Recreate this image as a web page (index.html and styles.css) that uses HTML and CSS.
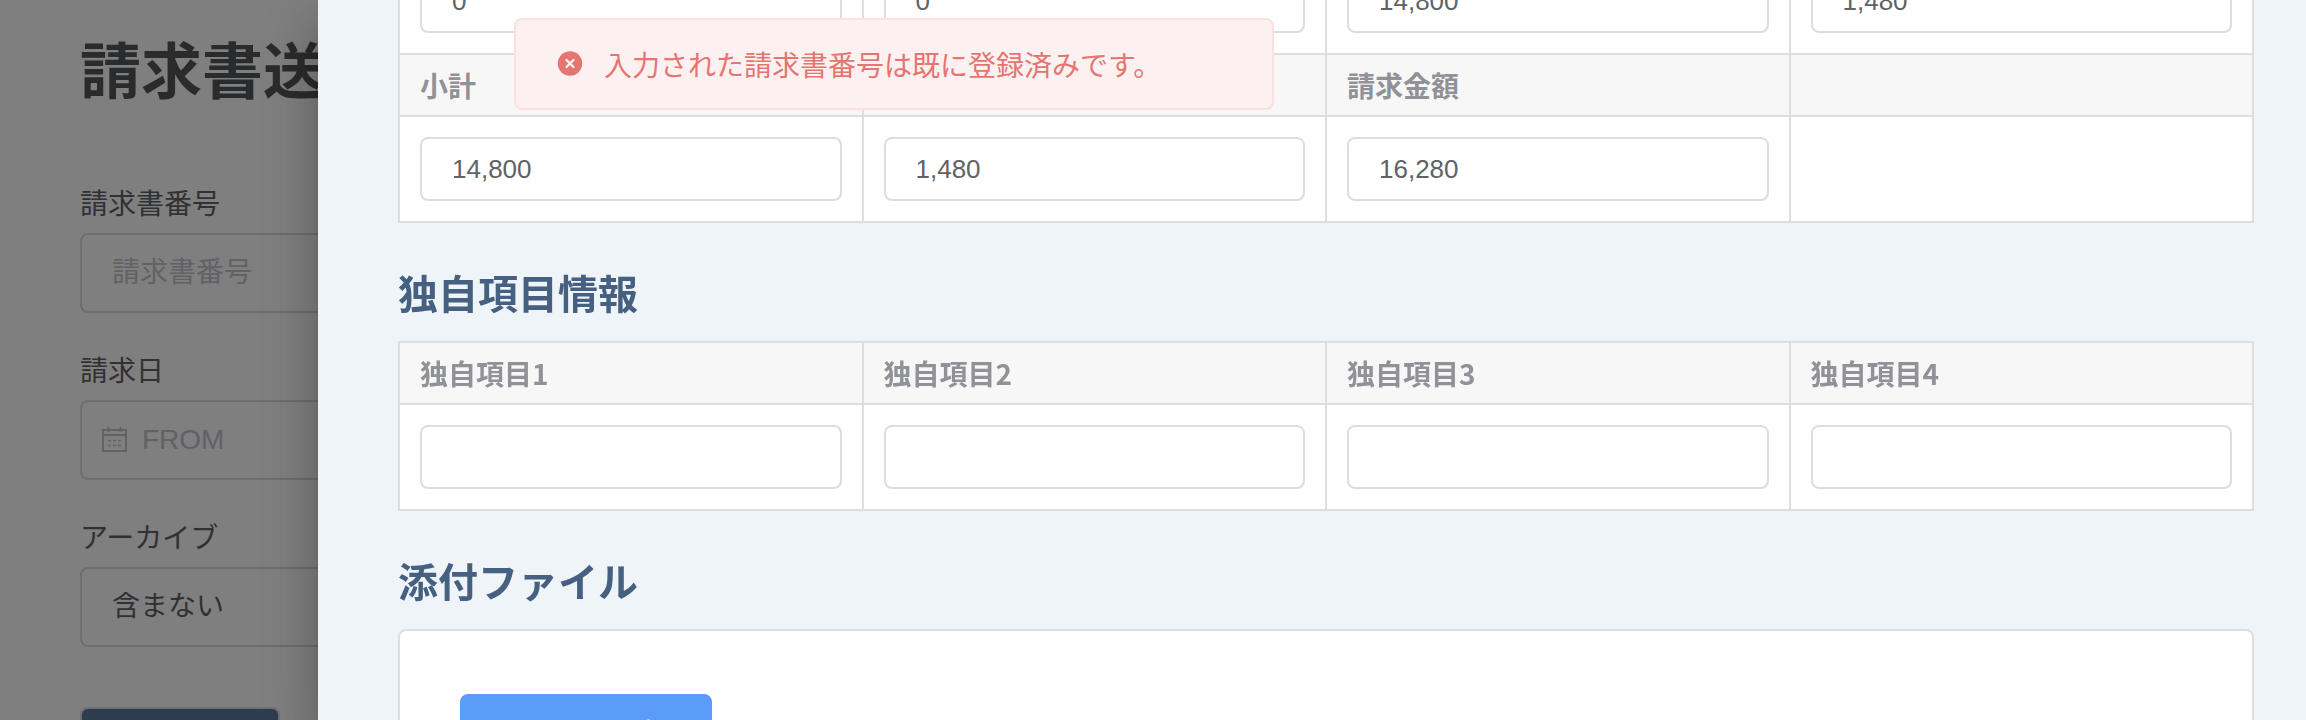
FILE: index.html
```
<!doctype html>
<html lang="ja">
<head>
    <meta charset="UTF-8">
    <meta name="viewport" content="width=device-width, initial-scale=1.0">
    <title>請求書送付</title>
    <link rel="stylesheet" href="styles.css">
</head>
<body>
    <main class="page">
        <h1 class="page-title">請求書送付</h1>
        <form class="search">
            <div class="field">
                <label for="number">請求書番号</label>
                <input class="control" type="text" id="number" placeholder="請求書番号">
            </div>
            <div class="field">
                <label for="from">請求日</label>
                <div class="control date">
                    <svg class="calendar" viewBox="0 0 26 26" fill="none" stroke="currentColor" stroke-width="2">
                        <path d="M1 3h23v21H1zM1 8h23M6.500 0v5M18.500 0v5"/>
                        <path d="M6 13.500h3M11 13.500h3M16 13.500h3M6 18.500h3M11 18.500h3M16 18.500h3" stroke-width="1.6"/>
                    </svg>
                    <input type="text" id="from" placeholder="FROM">
                </div>
            </div>
            <div class="field">
                <label for="archive">アーカイブ</label>
                <select class="control" id="archive">
                    <option>含まない</option>
                </select>
            </div>
            <button class="search-button" type="button">検索</button>
        </form>
    </main>

    <div class="overlay">
        <section class="drawer">
            <div class="drawer-body">
                <table class="items">
                    <tr>
                        <td><input type="text" value="0" aria-label="金額"></td>
                        <td><input type="text" value="0" aria-label="消費税"></td>
                        <td><input type="text" value="14,800" aria-label="金額"></td>
                        <td><input type="text" value="1,480" aria-label="消費税"></td>
                    </tr>
                    <tr>
                        <th id="subtotal">小計</th>
                        <th></th>
                        <th id="total">請求金額</th>
                        <th></th>
                    </tr>
                    <tr>
                        <td><input type="text" value="14,800" aria-labelledby="subtotal"></td>
                        <td><input type="text" value="1,480" aria-label="消費税"></td>
                        <td><input type="text" value="16,280" aria-labelledby="total"></td>
                        <td></td>
                    </tr>
                </table>

                <h2>独自項目情報</h2>
                <table class="items">
                    <tr>
                        <th id="item1">独自項目1</th>
                        <th id="item2">独自項目2</th>
                        <th id="item3">独自項目3</th>
                        <th id="item4">独自項目4</th>
                    </tr>
                    <tr>
                        <td><input type="text" aria-labelledby="item1"></td>
                        <td><input type="text" aria-labelledby="item2"></td>
                        <td><input type="text" aria-labelledby="item3"></td>
                        <td><input type="text" aria-labelledby="item4"></td>
                    </tr>
                </table>

                <h2>添付ファイル</h2>
                <div class="card">
                    <button class="upload" type="button">ファイル選択</button>
                </div>
            </div>
        </section>
    </div>

    <div class="message" role="alert">
        <svg class="message-icon" viewBox="0 0 28 28">
            <circle cx="14" cy="13.500" r="12.200" fill="currentColor"/>
            <path d="M10.500 10l7 7M17.500 10l-7 7" stroke="#fcf0f0" stroke-width="2.400" stroke-linecap="round"/>
        </svg>
        <p>入力された請求書番号は既に登録済みです。</p>
    </div>
</body>
</html>
```
FILE: styles.css
```
*{
    margin: 0;
    padding: 0;
    box-sizing: border-box;
}
body{
    height: 100vh;
    overflow: hidden;
    background-color: #fff;
    color: #606266;
    font-family: "Noto Sans CJK JP", sans-serif;
    font-size: 28px;
    line-height: 40px;
}
input,
select,
button{
    font-family: "Liberation Sans", "Noto Sans CJK JP", sans-serif;
    font-size: 28px;
    color: #606266;
}
input::placeholder{
    color: #c0c4cc;
    opacity: 1;
}

/* 検索画面 */
.page{
    height: 100%;
    padding: 28px 80px 0;
    overflow: hidden;
}
.page-title{
    margin-bottom: 75px;
    color: #545658;
    font-size: 61px;
    line-height: 80px;
}
.field{
    margin-bottom: 37px;
}
.field label{
    display: block;
    margin-bottom: 12px;
    line-height: 38px;
}
.control{
    display: block;
    width: 100%;
    height: 80px;
    padding: 0 30px;
    border: 2px solid #dcdce4;
    border-radius: 8px;
    background-color: #fff;
    appearance: none;
}
select.control{
    padding-bottom: 2px;
}
.date{
    display: flex;
    align-items: center;
    gap: 14px;
    padding: 0 20px;
}
.date input{
    flex: 1;
    border: 0;
}
.calendar{
    width: 26px;
    height: 26px;
    color: #c0c4cc;
}
.search-button{
    display: block;
    width: 200px;
    height: 80px;
    margin-top: 60px;
    border: 2px solid #dcdce4;
    border-radius: 8px;
    background-color: #5a7a9f;
    color: #fff;
}

/* ドロワー */
.overlay{
    position: fixed;
    inset: 0;
    padding-left: 318px;
    background-color: rgba(0, 0, 0, .5);
}
.drawer{
    height: 100%;
    background-color: #eff4f8;
    box-shadow: 0 16px 20px -10px rgba(0, 0, 0, .2),
                0 32px 48px 4px rgba(0, 0, 0, .14),
                0 12px 60px 10px rgba(0, 0, 0, .12);
}
.drawer-body{
    height: 100%;
    padding: 0 52px 0 80px;
    overflow: hidden;
}
.drawer-body > :first-child{
    margin-top: -53px;
}
.drawer h2{
    margin: 39px 0 19px;
    color: #456080;
    font-size: 40px;
    line-height: 60px;
}
.items{
    width: 100%;
    table-layout: fixed;
    border-collapse: collapse;
    background-color: #fff;
}
.items th,
.items td{
    border: 2px solid #dedede;
    padding: 20px;
}
.items th{
    height: 62px;
    padding: 10px 20px;
    background-color: #f7f7f7;
    color: #909298;
    text-align: left;
}
.items input{
    display: block;
    width: 100%;
    height: 64px;
    padding: 0 30px;
    border: 2px solid #dcdce4;
    border-radius: 8px;
    font-size: 26px;
}
.card{
    padding: 63px 60px;
    border: 2px solid #dedede;
    border-radius: 8px;
    background-color: #fff;
}
.upload{
    padding: 25px 40px 23px;
    border: 2px solid #5a9cf8;
    border-radius: 8px;
    background-color: #5a9cf8;
    color: #fff;
    line-height: 28px;
}

/* エラーメッセージ */
.message{
    position: fixed;
    top: 18px;
    left: 514px;
    display: flex;
    align-items: center;
    gap: 20px;
    width: 760px;
    padding: 24px 40px;
    border: 2px solid #fae1e0;
    border-radius: 8px;
    background-color: #fcf0f0;
    color: #e57570;
}
.message-icon{
    width: 28px;
    height: 28px;
}
```
